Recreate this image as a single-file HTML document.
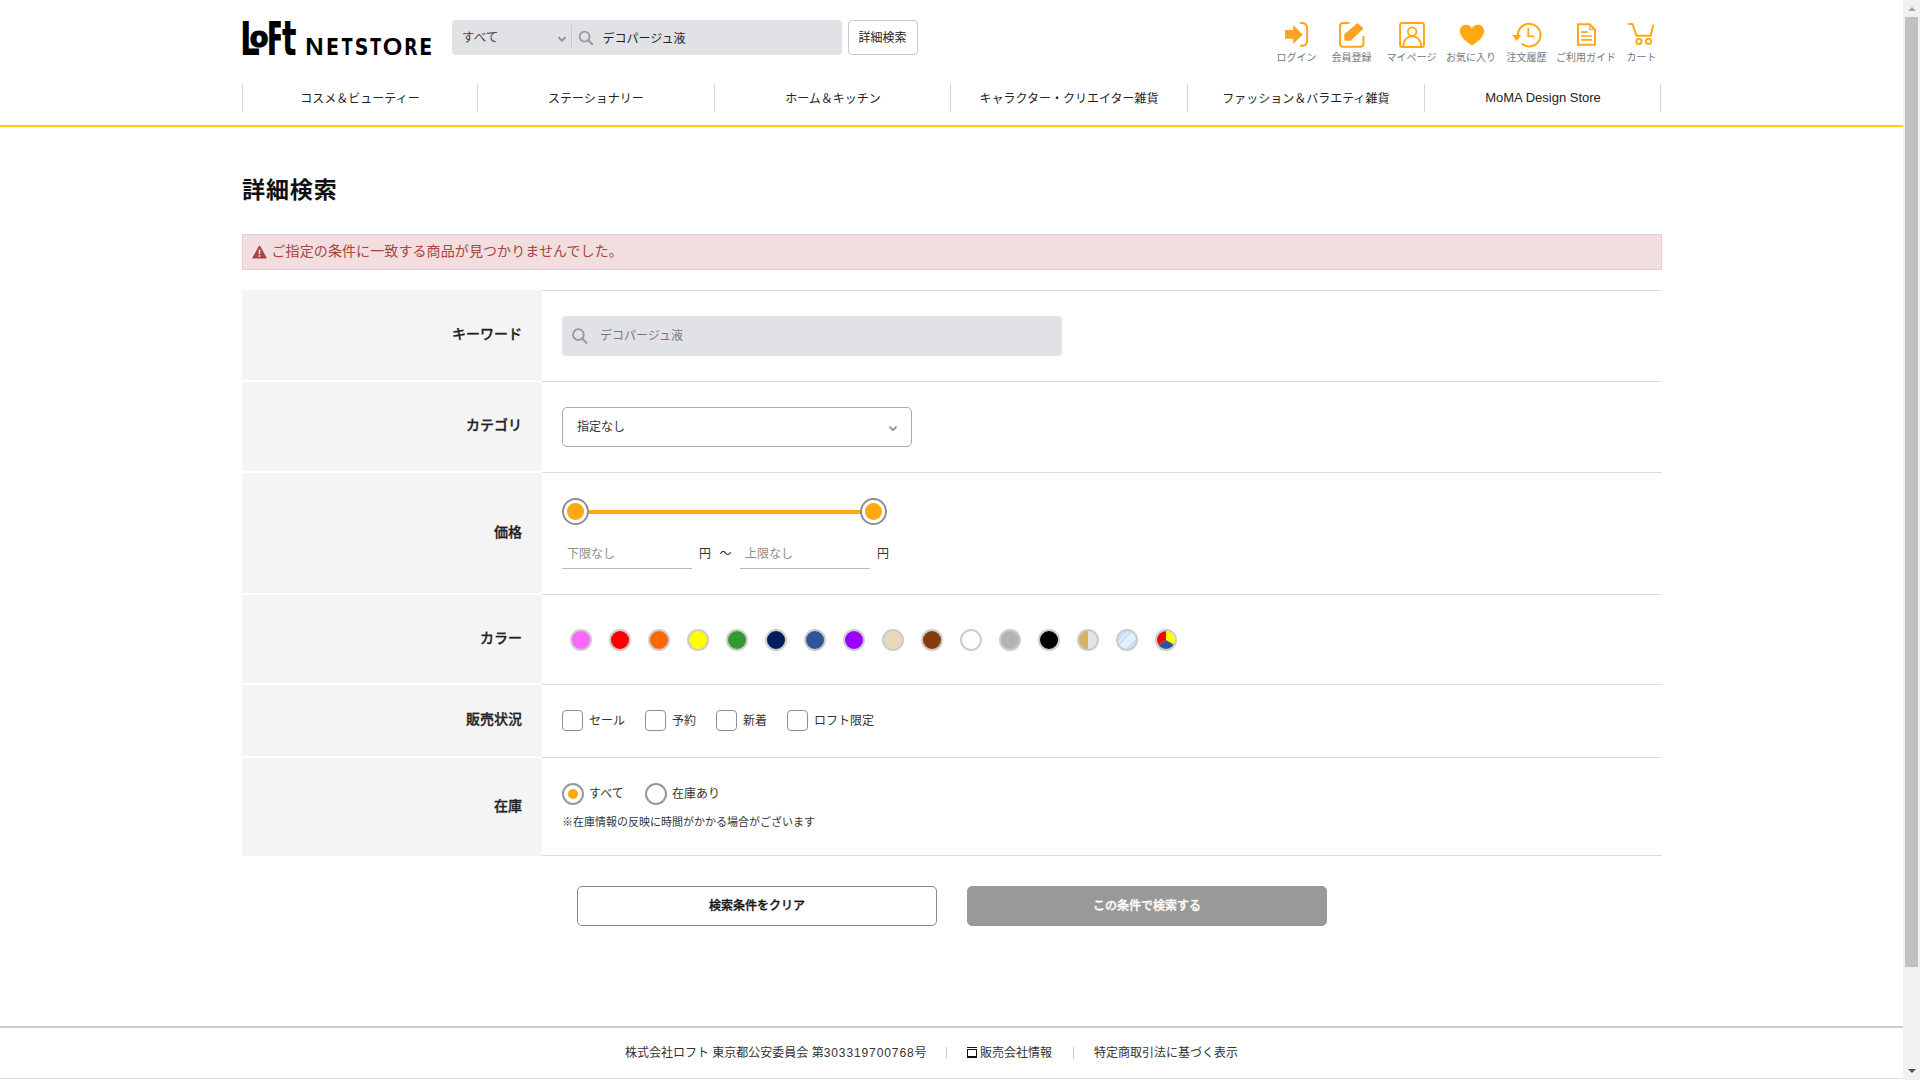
<!DOCTYPE html>
<html lang="ja">
<head>
<meta charset="utf-8">
<title>詳細検索 | ロフトネットストア</title>
<style>
*{box-sizing:border-box;margin:0;padding:0}
html,body{width:1920px;height:1080px;overflow:hidden;background:#fff}
body{position:relative;font-family:"Liberation Sans","Noto Sans CJK JP",sans-serif;font-size:12px;color:#222;line-height:1}
.abs{position:absolute}
.t{position:absolute;white-space:nowrap;line-height:1}
/* scrollbar */
#sb{position:absolute;left:1903px;top:0;width:17px;height:1080px;background:#f1f1f1}
#sb .thumb{position:absolute;left:2px;top:17px;width:13px;height:950px;background:#c1c1c1}
#sb .up{position:absolute;left:4.6px;top:6.6px;width:0;height:0;border-left:4px solid transparent;border-right:4px solid transparent;border-bottom:4.4px solid #a3a3a3}
#sb .dn{position:absolute;left:4.6px;top:1069px;width:0;height:0;border-left:4px solid transparent;border-right:4px solid transparent;border-top:4.4px solid #505050}
/* header */
#searchbox{left:452px;top:20px;width:390px;height:35px;background:#e1e2e6;border-radius:4px}
#advbtn{left:848px;top:20px;width:70px;height:35px;border:1px solid #c8c8c8;border-radius:4px;background:#fff}
.navsep{position:absolute;top:84px;width:1px;height:28px;background:#d5d5d5}
.nav{position:absolute;top:93px;width:236px;text-align:center;font-size:12px;color:#222;white-space:nowrap}
#yline{left:0;top:125px;width:1903px;height:2px;background:#ffcc00}
.hl{position:absolute;top:53px;font-size:10px;color:#777;white-space:nowrap;transform:translateX(-50%)}
.hi{position:absolute}
/* main */
#alert{left:242px;top:234px;width:1420px;height:36px;background:#f2dede;border:1px solid #ebccd1}
.th{position:absolute;left:242px;width:300px;background:#f4f4f4}
.thl{position:absolute;margin-top:-0.5px;right:1398px;font-size:14px;font-weight:500;-webkit-text-stroke:0.3px #222;color:#222;white-space:nowrap;text-align:right}
.tdl{position:absolute;left:542px;width:1120px;height:1px;background:#dcdcdc}
.cc{position:absolute;top:629px;width:22px;height:22px;border-radius:50%;border:2px solid #ccc;overflow:hidden}
.cb{position:absolute;top:710px;width:21px;height:21px;border:1px solid #8f8f8f;border-radius:4px;background:#fff}
.rd{position:absolute;top:783px;width:22px;height:22px;border:2.6px solid #999;border-radius:50%;background:#fff}
.l12{position:absolute;font-size:12px;color:#333;white-space:nowrap}
.btn{position:absolute;top:886px;width:360px;height:40px;border-radius:5px;font-size:12px;font-weight:500;-webkit-text-stroke:0.3px currentColor;text-align:center;line-height:38px}
</style>
</head>
<body>
<header>
<div id="logo" class="abs" style="left:0;top:0;width:460px;height:70px">
<svg width="460" height="70" viewBox="0 0 460 70" style="position:absolute;left:0;top:0">
<defs><clipPath id="cF"><rect x="260" y="10" width="20.8" height="60"/></clipPath></defs>
<text transform="translate(240.04,54.90) scale(0.3108,0.4650)" font-family="DejaVu Sans, sans-serif" font-weight="bold" font-size="100" fill="#000">L</text>
<text transform="translate(249.63,46.60) scale(0.2712,0.2857)" font-family="DejaVu Sans, sans-serif" font-weight="bold" font-size="100" fill="#000" stroke="#000" stroke-width="1.2" vector-effect="non-scaling-stroke">o</text>
<g clip-path="url(#cF)"><text transform="translate(266.51,54.90) scale(0.2920,0.4650)" font-family="DejaVu Sans, sans-serif" font-weight="bold" font-size="100" fill="#000">F</text>
</g>
<text transform="translate(282.01,54.90) scale(0.3032,0.4829)" font-family="DejaVu Sans, sans-serif" font-weight="bold" font-size="100" fill="#000">t</text>
<g><text transform="translate(305.19,54.80) scale(0.2551,0.2485)" font-family="Liberation Sans, sans-serif" font-weight="bold" font-size="100" fill="#000">N</text>
<text transform="translate(325.94,54.80) scale(0.1911,0.2346)" font-family="DejaVu Sans, sans-serif" font-weight="bold" font-size="100" fill="#000">E</text>
<text transform="translate(341.82,54.80) scale(0.1577,0.2346)" font-family="DejaVu Sans, sans-serif" font-weight="bold" font-size="100" fill="#000">T</text>
<text transform="translate(354.84,54.68) scale(0.1896,0.2315)" font-family="DejaVu Sans, sans-serif" font-weight="bold" font-size="100" fill="#000">S</text>
<text transform="translate(370.32,54.80) scale(0.1577,0.2346)" font-family="DejaVu Sans, sans-serif" font-weight="bold" font-size="100" fill="#000">T</text>
<text transform="translate(382.87,54.75) scale(0.2518,0.2472)" font-family="Liberation Sans, sans-serif" font-weight="bold" font-size="100" fill="#000">O</text>
<text transform="translate(404.22,54.80) scale(0.1717,0.2346)" font-family="DejaVu Sans, sans-serif" font-weight="bold" font-size="100" fill="#000">R</text>
<text transform="translate(419.36,54.80) scale(0.1892,0.2346)" font-family="DejaVu Sans, sans-serif" font-weight="bold" font-size="100" fill="#000">E</text>
</g>
</svg>
</div>

<div id="searchbox" class="abs"></div>
<div class="t" style="left:462px;top:32px;font-size:12.5px;color:#444">すべて</div>
<svg class="abs" style="left:557px;top:35px" width="10" height="8" viewBox="0 0 10 8"><path d="M1.5 2.3 L5 5.7 L8.5 2.3" fill="none" stroke="#929292" stroke-width="2"/></svg>
<div class="abs" style="left:571px;top:25px;width:1px;height:23px;background:#c9cacd"></div>
<svg class="abs" style="left:578.4px;top:30.4px" width="16" height="16" viewBox="0 0 16 16"><circle cx="6.6" cy="6.6" r="5" fill="none" stroke="#999" stroke-width="1.7"/><path d="M10.3 10.3 L14.3 14.3" stroke="#999" stroke-width="2" stroke-linecap="round"/></svg>
<div class="t" style="left:602.5px;top:32.5px;font-size:12px;color:#222">デコパージュ液</div>
<div id="advbtn" class="abs"></div>
<div class="t" style="left:858.5px;top:32px;font-size:12px;color:#222">詳細検索</div>

<!-- header icons -->
<svg class="abs" style="left:1270px;top:14px" width="400" height="40" viewBox="1270 14 400 40">
<!-- login -->
<path d="M1285.1 30.1 H1293.2 V25 L1302.7 34.4 L1293.2 43.9 V38.7 H1285.1 Z" fill="#f9a325"/>
<path d="M1300 23 H1302 Q1307.1 23 1307.1 28.5 V40.3 Q1307.1 45.8 1302 45.8 H1300" fill="none" stroke="#f9a325" stroke-width="1.9"/>
<!-- register -->
<path d="M1349.3 23 H1343.2 Q1340.1 23 1340.1 26.1 V43.7 Q1340.1 46.8 1343.2 46.8 H1360.4 Q1363.5 46.8 1363.5 43.7 V36" fill="none" stroke="#f9a325" stroke-width="2"/>
<path d="M1357.5 22.9 L1363.6 28.5 L1350.6 40.8 H1344.3 V34.3 Z" fill="#f9a325"/>
<!-- mypage -->
<rect x="1400.1" y="22.9" width="23.8" height="24.2" rx="2" fill="none" stroke="#ffa80f" stroke-width="2"/>
<circle cx="1412.2" cy="31.6" r="4.3" fill="none" stroke="#ffa80f" stroke-width="1.8"/>
<path d="M1403.2 46.6 C1403.2 32.8 1421.2 32.8 1421.2 46.6" fill="none" stroke="#ffa80f" stroke-width="1.8"/>
<!-- heart -->
<path d="M1472 45.2 C1470.5 44.6 1459.8 38 1459.8 31.3 C1459.8 27.5 1462.6 24.8 1466 24.8 C1468.6 24.8 1470.8 26.2 1472 28.2 C1473.2 26.2 1475.4 24.8 1478 24.8 C1481.4 24.8 1484.2 27.5 1484.2 31.3 C1484.2 38 1473.5 44.6 1472 45.2 Z" fill="#ffa80f"/>
<!-- history -->
<path d="M1517.9 35 A11.3 11.3 0 1 1 1521.6 43.5" fill="none" stroke="#ffa80f" stroke-width="2"/>
<path d="M1512 35 H1521.4 L1516.7 41 Z" fill="#ffa80f"/>
<path d="M1528.3 28 V36.4 H1534.5" fill="none" stroke="#ffa80f" stroke-width="1.8"/>
<!-- guide -->
<path d="M1578 24.3 H1589.6 L1595 29.6 V44.7 H1578 Z" fill="none" stroke="#ffa80f" stroke-width="2" stroke-linejoin="miter"/>
<path d="M1589.8 24.3 V29.4 H1595" fill="none" stroke="#ffa80f" stroke-width="1.2"/>
<path d="M1581 32.1 H1587.8 M1581 36 H1592 M1581 39.9 H1592" fill="none" stroke="#ffa80f" stroke-width="1.7"/>
<!-- cart -->
<path d="M1628.3 24 H1632.4 L1636.6 35.8 H1650.6 L1653.3 25" fill="none" stroke="#ffa80f" stroke-width="2"/>
<circle cx="1638.9" cy="41.4" r="2.6" fill="none" stroke="#ffa80f" stroke-width="1.9"/>
<circle cx="1648.5" cy="41.4" r="2.6" fill="none" stroke="#ffa80f" stroke-width="1.9"/>
</svg>
<div class="hl" style="left:1296.5px">ログイン</div>
<div class="hl" style="left:1351.5px">会員登録</div>
<div class="hl" style="left:1411.5px">マイページ</div>
<div class="hl" style="left:1471px">お気に入り</div>
<div class="hl" style="left:1526.5px">注文履歴</div>
<div class="hl" style="left:1586px">ご利用ガイド</div>
<div class="hl" style="left:1641.5px">カート</div>

</header>
<nav>
<div class="navsep" style="left:242px"></div>
<div class="navsep" style="left:477px"></div>
<div class="navsep" style="left:714px"></div>
<div class="navsep" style="left:950px"></div>
<div class="navsep" style="left:1187px"></div>
<div class="navsep" style="left:1424px"></div>
<div class="navsep" style="left:1660px"></div>
<div class="nav" style="left:242px">コスメ＆ビューティー</div>
<div class="nav" style="left:478px">ステーショナリー</div>
<div class="nav" style="left:715px">ホーム＆キッチン</div>
<div class="nav" style="left:951px">キャラクター・クリエイター雑貨</div>
<div class="nav" style="left:1188px">ファッション＆バラエティ雑貨</div>
<div class="nav" style="left:1425px;top:91px;font-size:13px">MoMA Design Store</div>
<div id="yline" class="abs"></div>

</nav>
<main>
<div class="t" style="left:242px;top:178.5px;font-size:23px;letter-spacing:0.9px;font-weight:bold;color:#111">詳細検索</div>
<div id="alert" class="abs"></div>
<svg class="abs" style="left:252px;top:245px" width="15" height="14" viewBox="0 0 15 14"><path d="M7.5 0.8 L14.3 13 L0.7 13 Z" fill="#a94442" stroke="#a94442" stroke-width="1" stroke-linejoin="round"/><rect x="6.7" y="4.6" width="1.6" height="4.6" fill="#f2dede"/><rect x="6.7" y="10.2" width="1.6" height="1.7" fill="#f2dede"/></svg>
<div class="t" style="left:271.5px;top:243.5px;font-size:14px;letter-spacing:0.1px;color:#a94442">ご指定の条件に一致する商品が見つかりませんでした。</div>

<div class="th" style="top:290px;height:90px"></div>
<div class="thl" style="top:327.0px">キーワード</div>
<div class="th" style="top:382px;height:89px"></div>
<div class="thl" style="top:418.5px">カテゴリ</div>
<div class="th" style="top:473px;height:120px"></div>
<div class="thl" style="top:525.0px">価格</div>
<div class="th" style="top:595px;height:88px"></div>
<div class="thl" style="top:631.0px">カラー</div>
<div class="th" style="top:685px;height:71px"></div>
<div class="thl" style="top:712.5px">販売状況</div>
<div class="th" style="top:758px;height:98px"></div>
<div class="thl" style="top:799.0px">在庫</div>
<div class="tdl" style="top:290px"></div>
<div class="tdl" style="top:381px"></div>
<div class="tdl" style="top:472px"></div>
<div class="tdl" style="top:594px"></div>
<div class="tdl" style="top:684px"></div>
<div class="tdl" style="top:757px"></div>
<div class="tdl" style="top:855px"></div>
<div class="abs" style="left:562px;top:316px;width:500px;height:40px;background:#e1e2e6;border-radius:4px"></div>
<svg class="abs" style="left:571px;top:327px" width="18" height="18" viewBox="0 0 18 18"><circle cx="7.4" cy="7.6" r="5.4" fill="none" stroke="#999" stroke-width="1.8"/><path d="M11.4 11.6 L15.4 15.9" stroke="#999" stroke-width="2.1" stroke-linecap="round"/></svg>
<div class="t" style="left:600px;top:330px;font-size:12px;color:#777">デコパージュ液</div>
<div class="abs" style="left:562px;top:407px;width:350px;height:40px;background:#fff;border:1px solid #a9a9a9;border-radius:5px"></div>
<div class="t" style="left:577px;top:421px;font-size:12px;color:#333">指定なし</div>
<svg class="abs" style="left:888px;top:425px" width="10" height="8" viewBox="0 0 10 8"><path d="M1.5 1.6 L5 5.2 L8.5 1.6" fill="none" stroke="#929292" stroke-width="1.9"/></svg>
<div class="abs" style="left:575px;top:510px;width:298px;height:4px;background:#ffa90d"></div>
<div class="abs" style="left:562px;top:498px;width:27px;height:27px;border-radius:50%;border:2px solid #8f8f8f;background:#fff"></div>
<div class="abs" style="left:567px;top:503px;width:17px;height:17px;border-radius:50%;background:#ffa90d"></div>
<div class="abs" style="left:860px;top:498px;width:27px;height:27px;border-radius:50%;border:2px solid #8f8f8f;background:#fff"></div>
<div class="abs" style="left:865px;top:503px;width:17px;height:17px;border-radius:50%;background:#ffa90d"></div>
<div class="t" style="left:567px;top:548px;font-size:12px;color:#8e8e8e">下限なし</div>
<div class="abs" style="left:562px;top:568px;width:130px;height:1px;background:#bbb"></div>
<div class="t" style="left:699px;top:548px;font-size:12px;color:#333">円</div>
<div class="t" style="left:719.5px;top:548px;font-size:12px;color:#333">～</div>
<div class="t" style="left:745px;top:548px;font-size:12px;color:#8e8e8e">上限なし</div>
<div class="abs" style="left:740px;top:568px;width:130px;height:1px;background:#bbb"></div>
<div class="t" style="left:877px;top:548px;font-size:12px;color:#333">円</div>
<div class="cc" style="left:570px;background:#ff66ff"></div>
<div class="cc" style="left:609px;background:#ff0000"></div>
<div class="cc" style="left:648px;background:#ff6600"></div>
<div class="cc" style="left:687px;background:#ffff00"></div>
<div class="cc" style="left:726px;background:#339933"></div>
<div class="cc" style="left:765px;background:#001e5e"></div>
<div class="cc" style="left:804px;background:#2f5597"></div>
<div class="cc" style="left:843px;background:#9900ff"></div>
<div class="cc" style="left:882px;background:#e8d9b9"></div>
<div class="cc" style="left:921px;background:#843c0c"></div>
<div class="cc" style="left:960px;background:#ffffff"></div>
<div class="cc" style="left:999px;background:#b3b3b3"></div>
<div class="cc" style="left:1038px;background:#000000"></div>
<div class="cc" style="left:1077px;background:linear-gradient(90deg,#d9b364 0,#d9b364 50%,#e3e3e3 50%)"></div>
<div class="cc" style="left:1116px;background:linear-gradient(135deg,#c9dffa 0,#c9dffa 30%,#e4effc 30%,#e4effc 36%,#c9dffa 36%,#c9dffa 42%,#e4effc 42%,#e4effc 72%,#c9dffa 72%)"></div>
<div class="cc" style="left:1155px;background:#fff"><svg width="18" height="18" viewBox="0 0 18 18" style="display:block"><path d="M9 9 L9.00 -3.00 A12 12 0 0 1 19.39 15.00 Z" fill="#ffff00"/><path d="M9 9 L19.39 15.00 A12 12 0 0 1 -1.39 15.00 Z" fill="#2f5597"/><path d="M9 9 L-1.39 15.00 A12 12 0 0 1 9.00 -3.00 Z" fill="#ff0000"/></svg></div>
<div class="cb" style="left:562px"></div><div class="l12" style="left:589px;top:715px">セール</div>
<div class="cb" style="left:645px"></div><div class="l12" style="left:672px;top:715px">予約</div>
<div class="cb" style="left:716px"></div><div class="l12" style="left:743px;top:715px">新着</div>
<div class="cb" style="left:787px"></div><div class="l12" style="left:814px;top:715px">ロフト限定</div>
<div class="rd" style="left:562px"></div><div class="abs" style="left:568px;top:789px;width:10px;height:10px;border-radius:50%;background:#ffa90d"></div>
<div class="l12" style="left:589px;top:788px">すべて</div>
<div class="rd" style="left:645px"></div>
<div class="l12" style="left:672px;top:788px">在庫あり</div>
<div class="t" style="left:562px;top:817px;font-size:11px;color:#333">※在庫情報の反映に時間がかかる場合がございます</div>
<div class="btn" style="left:577px;border:1px solid #888;background:#fff;color:#111">検索条件をクリア</div>
<div class="btn" style="left:967px;border:1px solid #999;background:#999;color:#fff">この条件で検索する</div>


</main>
<footer>
<div class="abs" style="left:0;top:1026px;width:1903px;height:2px;background:#ccc"></div>
<div class="abs" style="left:0;top:1078px;width:1903px;height:1px;background:#ddd"></div>
<div class="t" style="left:625px;top:1047px;font-size:12px;color:#333">株式会社ロフト 東京都公安委員会 第<span style="letter-spacing:0.9px">303319700768</span>号</div>
<div class="abs" style="left:946px;top:1047px;width:1px;height:12px;background:#ccc"></div>
<div class="abs" style="left:967px;top:1046.8px;width:10px;height:1.2px;background:#111"></div><div class="abs" style="left:967px;top:1048.8px;width:10px;height:9px;border:1.5px solid #111;border-top-width:1.2px;border-bottom-width:2.5px"></div>
<div class="t" style="left:980px;top:1047px;font-size:12px;color:#333">販売会社情報</div>
<div class="abs" style="left:1073px;top:1047px;width:1px;height:12px;background:#ccc"></div>
<div class="t" style="left:1094px;top:1047px;font-size:12px;color:#333">特定商取引法に基づく表示</div>

</footer>
<div id="sb"><div class="up"></div><div class="thumb"></div><div class="dn"></div></div>
</body>
</html>
